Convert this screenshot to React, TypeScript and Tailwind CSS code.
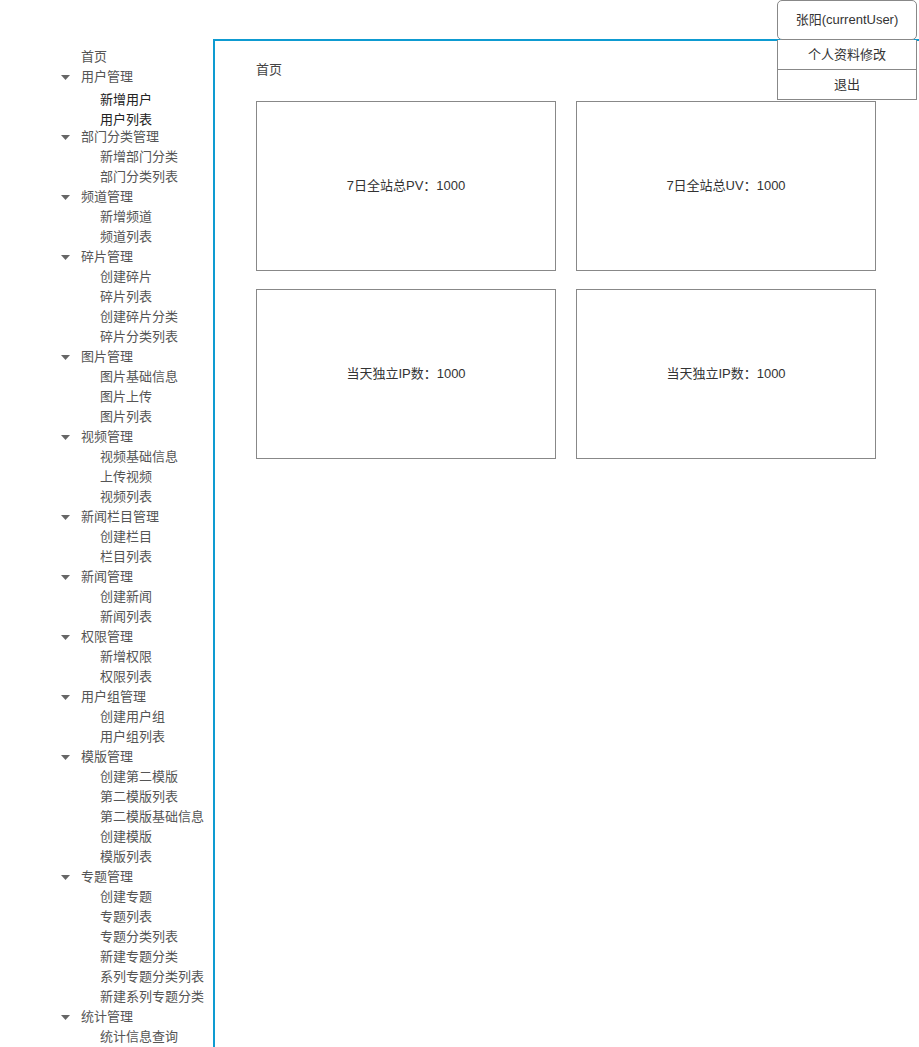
const menu: { title: string; children: string[] }[] = [
  { title: '用户管理', children: ['新增用户', '用户列表'] },
  { title: '部门分类管理', children: ['新增部门分类', '部门分类列表'] },
  { title: '频道管理', children: ['新增频道', '频道列表'] },
  { title: '碎片管理', children: ['创建碎片', '碎片列表', '创建碎片分类', '碎片分类列表'] },
  { title: '图片管理', children: ['图片基础信息', '图片上传', '图片列表'] },
  { title: '视频管理', children: ['视频基础信息', '上传视频', '视频列表'] },
  { title: '新闻栏目管理', children: ['创建栏目', '栏目列表'] },
  { title: '新闻管理', children: ['创建新闻', '新闻列表'] },
  { title: '权限管理', children: ['新增权限', '权限列表'] },
  { title: '用户组管理', children: ['创建用户组', '用户组列表'] },
  { title: '模版管理', children: ['创建第二模版', '第二模版列表', '第二模版基础信息', '创建模版', '模版列表'] },
  { title: '专题管理', children: ['创建专题', '专题列表', '专题分类列表', '新建专题分类', '系列专题分类列表', '新建系列专题分类'] },
  { title: '统计管理', children: ['统计信息查询'] },
];

const stats = ['7日全站总PV：1000', '7日全站总UV：1000', '当天独立IP数：1000', '当天独立IP数：1000'];

function Caret() {
  return (
    <svg width="9" height="5" viewBox="0 0 9 5" className="mr-[11px]">
      <path d="M0 0 H9 L4.5 5 Z" fill="#666" />
    </svg>
  );
}

export default function App() {
  return (
    <div
      className="relative flex w-[919px] h-[1047px] overflow-hidden bg-white text-[13px] text-[#333]"
      style={{ fontFamily: '"Liberation Sans", "Noto Sans CJK SC", sans-serif' }}
    >
      <aside className="w-[213px] shrink-0 pt-[47px] pl-[61px] text-[#555]">
        <div className="h-[20px] leading-[20px] pl-[20px]">首页</div>
        {menu.map((group, gi) => (
          <div key={group.title}>
            <div className="flex items-center h-[20px] leading-[20px]">
              <Caret />
              <span>{group.title}</span>
            </div>
            <div className={gi === 0 ? 'mt-[3px] mb-[-3px] text-[#222]' : ''}>
              {group.children.map((c) => (
                <div key={c} className="h-[20px] leading-[20px] pl-[39px]">
                  {c}
                </div>
              ))}
            </div>
          </div>
        ))}
      </aside>

      <main className="flex-1 mt-[39px] border-t-2 border-l-2 border-[#0e9bd1] pl-[41px] pt-[19px]">
        <div className="h-[20px] leading-[20px] text-[#444]">首页</div>
        <div className="mt-[21px] grid grid-cols-[300px_300px] gap-x-[20px] gap-y-[18px]">
          {stats.map((s, i) => (
            <div key={i} className="h-[170px] border border-[#888] flex items-center justify-center">
              {s}
            </div>
          ))}
        </div>
      </main>

      <div className="absolute top-0 left-[777px] w-[140px] text-[#333]">
        <div className="h-[40px] flex items-center justify-center border border-[#888] rounded-[5px] bg-white">
          张阳(currentUser)
        </div>
        <div className="h-[30px] flex items-center justify-center border border-t-0 border-[#888] bg-white">
          个人资料修改
        </div>
        <div className="h-[30px] flex items-center justify-center border border-t-0 border-[#888] bg-white">
          退出
        </div>
      </div>
    </div>
  );
}
